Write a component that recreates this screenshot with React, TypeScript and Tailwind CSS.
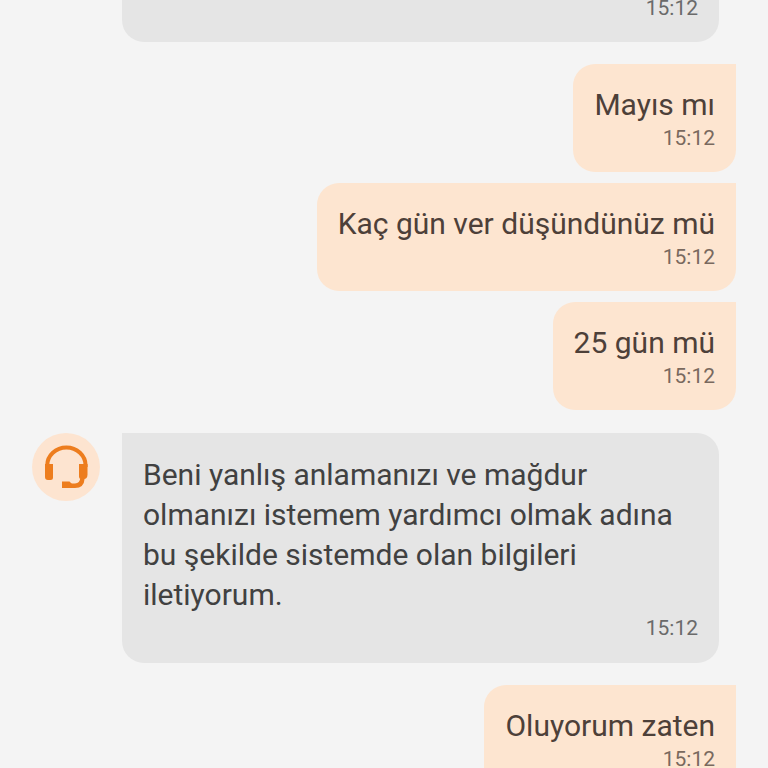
import type { ReactNode } from "react";

type Message = {
  id: number;
  from: "agent" | "user";
  text: string;
  time: string;
};

const messages: Message[] = [
  { id: 1, from: "user", text: "Mayıs mı", time: "15:12" },
  { id: 2, from: "user", text: "Kaç gün ver düşündünüz mü", time: "15:12" },
  { id: 3, from: "user", text: "25 gün mü", time: "15:12" },
  {
    id: 4,
    from: "agent",
    text: "Beni yanlış anlamanızı ve mağdur olmanızı istemem yardımcı olmak adına bu şekilde sistemde olan bilgileri iletiyorum.",
    time: "15:12",
  },
  { id: 5, from: "user", text: "Oluyorum zaten", time: "15:12" },
];

function AgentAvatar() {
  return (
    <svg viewBox="0 0 68 68" className="size-[68px] shrink-0" role="img" aria-label="Temsilci">
      <circle cx="34" cy="34" r="34" fill="#fde4d0" />
      <g fill="none" stroke="#ed7d1e">
        <path d="M15.2 34v-1.500a19.200 18 0 0 1 38.400 0V34" strokeWidth="4" />
        <path d="M50.500 45c-.3 5-2.500 7.800-7.500 7.800h-6" strokeWidth="4.400" />
      </g>
      <g fill="#ed7d1e">
        <path d="M13 31h8v13.500a2.500 2.500 0 0 1-2.500 2.500H16a3 3 0 0 1-3-3z" />
        <path d="M47 31h8.500v10.500c0 3-1.500 4.500-3.500 4.500h-2.500a2.500 2.500 0 0 1-2.500-2.500z" />
        <path d="M30 48.500h7.500l2 2v4.500H30z" />
      </g>
    </svg>
  );
}

function Time({ children }: { children: ReactNode }) {
  return <time className="block text-right text-[21px] leading-[26px] opacity-75">{children}</time>;
}

function AgentMessage({ message }: { message: Message }) {
  return (
    <li className="mt-3 mb-[11px] flex items-start gap-[22px] pr-[17px]">
      <AgentAvatar />
      <div className="flex-1 rounded-[22px] rounded-tl-none bg-[#e5e5e5] px-[21px] py-[22px] text-[#414141]">
        <p className="text-[30px] leading-[40px]">{message.text}</p>
        <Time>{message.time}</Time>
      </div>
    </li>
  );
}

function UserMessage({ message }: { message: Message }) {
  return (
    <li className="flex justify-end">
      <div className="rounded-[22px] rounded-tr-none bg-[#fde5d0] p-[21px] text-[#4d4039]">
        <p className="text-[30px] leading-[40px]">{message.text}</p>
        <Time>{message.time}</Time>
      </div>
    </li>
  );
}

export default function App() {
  return (
    <main className="h-screen overflow-hidden bg-[#f4f4f4] px-8 font-['Roboto','Noto_Sans',sans-serif]">
      {/* tail of the previous agent message, scrolled past the top edge */}
      <div className="-mt-[5px] mb-[22px] ml-[90px] mr-[17px] rounded-b-[22px] bg-[#e5e5e5] px-[21px] pb-[21px] text-[#414141]">
        <Time>15:12</Time>
      </div>
      <ul className="flex flex-col gap-[11px]">
        {messages.map((message) =>
          message.from === "agent" ? (
            <AgentMessage key={message.id} message={message} />
          ) : (
            <UserMessage key={message.id} message={message} />
          )
        )}
      </ul>
    </main>
  );
}
